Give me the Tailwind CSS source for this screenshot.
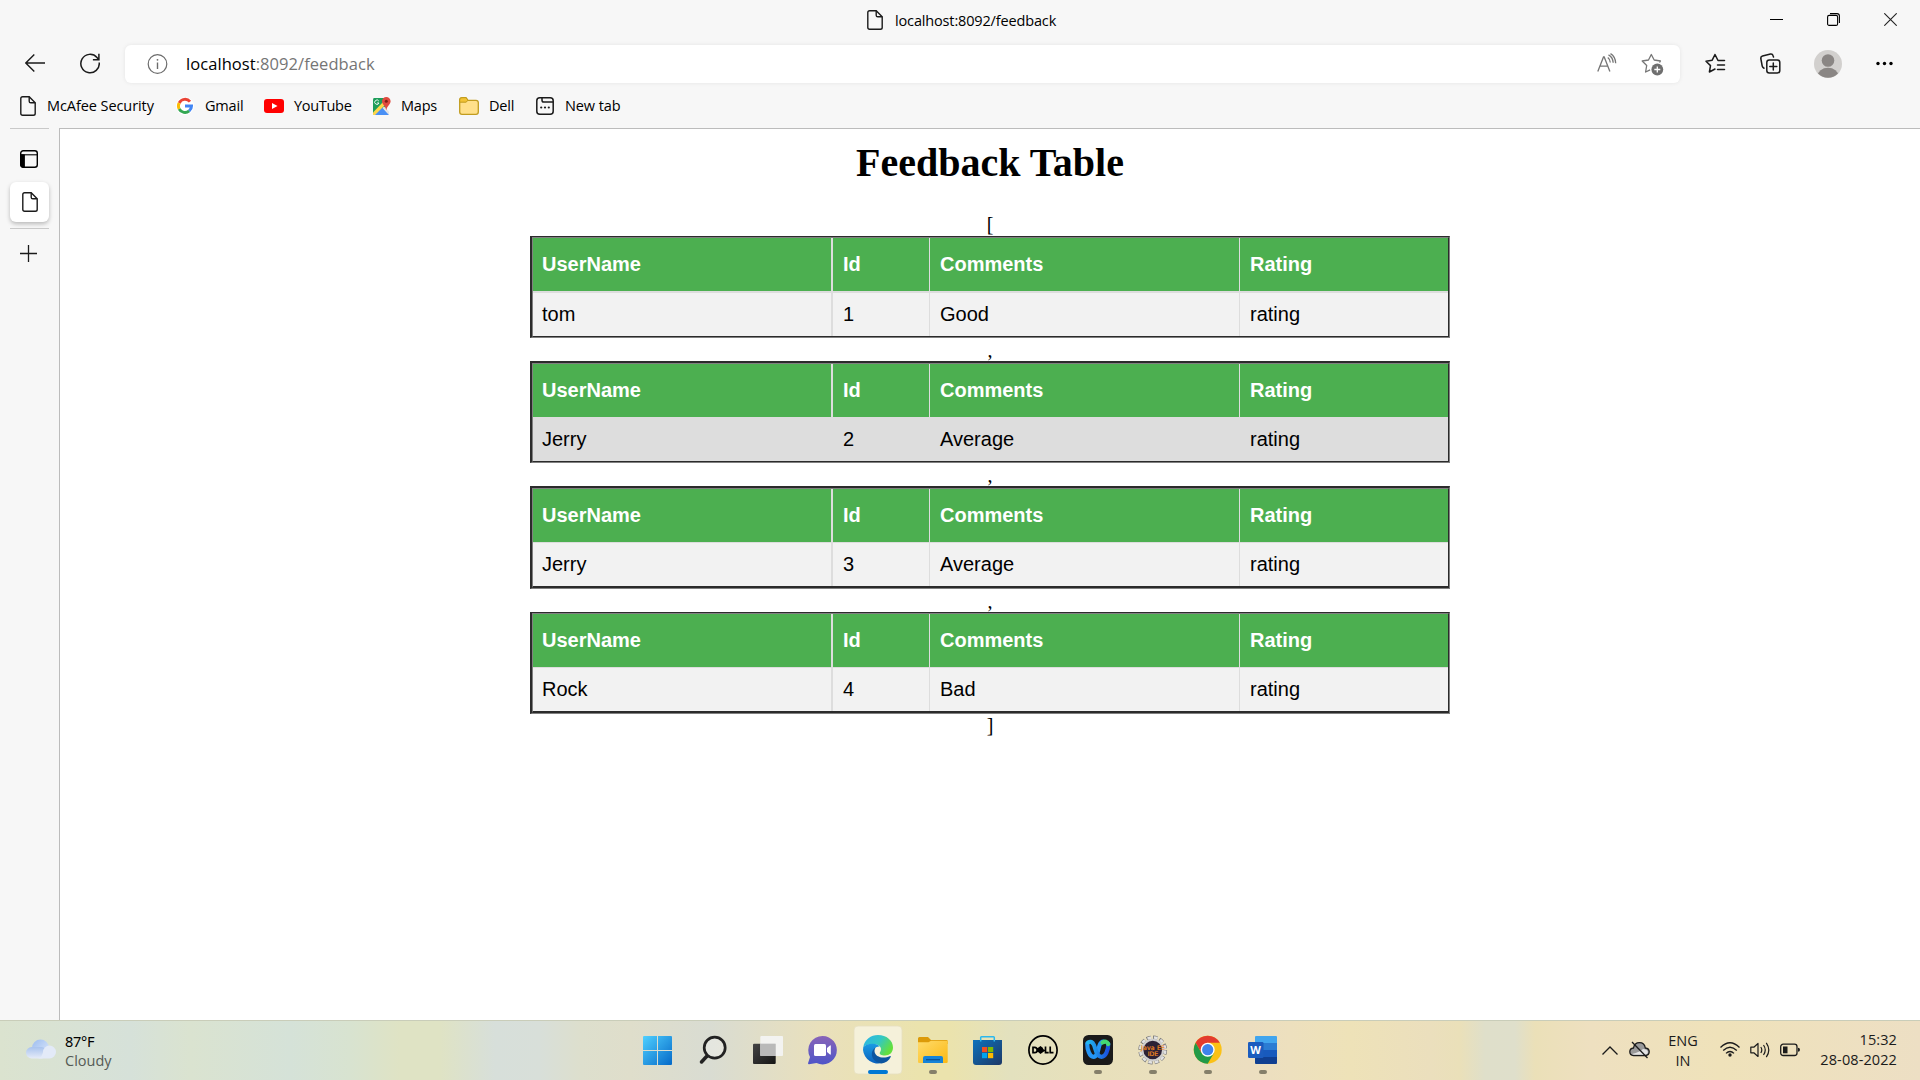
<!DOCTYPE html>
<html lang="en">
<head>
<meta charset="utf-8">
<title>localhost:8092/feedback</title>
<script src="https://cdn.jsdelivr.net/npm/@tailwindcss/browser@4"></script>
</head>
<body class="w-[1920px] h-[1080px] overflow-hidden bg-[#f7f7f7] font-['Open_Sans','Noto_Sans',sans-serif] text-black flex flex-col">

<!-- Title bar -->
<header class="h-[41px] shrink-0 flex items-start">
  <div class="w-[867px] shrink-0"></div>
  <svg class="mt-[10px] w-4 h-5 shrink-0" viewBox="0 0 16 20" fill="none" stroke="#1b1b1b" stroke-width="1.4"><path d="M2.6.8h6.6l6 6v10.6q0 1.8-1.8 1.8H2.6Q.8 19.200.8 17.400V2.600Q.8.8 2.600.8z"/><path d="M9.200.8v4.400q0 1.600 1.600 1.600h4.400"/></svg>
  <div class="ml-3 mt-[11px] w-[875px] text-[14.500px] leading-5 whitespace-nowrap tracking-[-0.150px]">localhost:8092/feedback</div>
  <div class="flex items-center mt-[13px] gap-[44px]">
    <svg class="w-[13px] h-[13px]" viewBox="0 0 13 13"><path d="M0 6.500h13" stroke="#000"/></svg>
    <svg class="w-[13px] h-[13px]" viewBox="0 0 13 13" fill="none" stroke="#000" stroke-width="1.100"><rect x=".6" y="2.400" width="10" height="10" rx="1.500"/><path d="M3 .6h7q2.400 0 2.400 2.400v7"/></svg>
    <svg class="w-[13px] h-[13px]" viewBox="0 0 13 13" stroke="#222" stroke-width="1.100"><path d="M.3.3l12.400 12.400M12.700.3L.3 12.700"/></svg>
  </div>
</header>

<!-- Address row -->
<div class="h-[46px] shrink-0 flex items-start">
  <svg class="ml-[25px] mt-[13px] w-5 h-[18px] shrink-0" viewBox="0 0 20 18" fill="none" stroke="#1b1b1b" stroke-width="1.400"><path d="M20 9H.8M9.300.6L.8 9l8.500 8.400"/></svg>
  <svg class="ml-[35px] mt-[12px] w-5 h-[21px] shrink-0" viewBox="0 0 20 21" fill="none" stroke="#1b1b1b" stroke-width="1.500"><path d="M19.200 9.500A9.200 9.200 0 1 1 17 4.500l1.800 2.200M18.900.8v6h-6"/></svg>
  <div class="ml-[25px] mt-1 w-[1555px] h-[38px] shrink-0 rounded-md bg-white shadow-[0_0_4px_rgba(0,0,0,0.08)] flex items-start">
    <svg class="ml-[22px] mt-[9px] w-[21px] h-[20px] shrink-0" viewBox="0 0 21 20" fill="none" stroke="#6b6b6b" stroke-width="1.200"><circle cx="10.500" cy="10" r="9.300"/><path d="M10.500 8.500v6.500" stroke-width="1.400"/><circle cx="10.500" cy="5.800" r=".9" fill="#6b6b6b" stroke="none"/></svg>
    <div class="ml-[18px] w-[1411px] mt-[6px] text-[16.500px] leading-[25px] whitespace-nowrap tracking-[0.060px] text-[#757575]"><span class="text-black">localhost</span>:8092/feedback</div>
    <svg class="mt-[8px] w-5 h-[20px] shrink-0" viewBox="0 0 20 20" fill="none" stroke="#767676" stroke-width="1.300"><path d="M.8 18.500L6.500 4h.7l5.700 14.500M2.800 13.200h8"/><path d="M10.800 4.500q2.500 2 2.500 5M11.500 1.800q4.400 2.300 4.700 8M13.500.6q4.900 3 5.200 9.600"/></svg>
    <svg class="ml-[24px] mt-[8px] w-[23px] h-[23px] shrink-0" viewBox="0 0 23 23"><path d="M18.500 9.500l1-1.500-6.300-1L10.300 1.500 7.500 7 1.200 8l4.500 4.500L4.600 19l4.500-2.200" fill="none" stroke="#767676" stroke-width="1.300" stroke-linejoin="round"/><circle cx="16.300" cy="16.500" r="5.900" fill="#6f6f6f"/><path d="M16.300 13.500v6M13.300 16.500h6" stroke="#fff" stroke-width="1.300"/></svg>
  </div>
  <svg class="ml-[25px] mt-[12px] w-[21px] h-[21px] shrink-0" viewBox="0 0 21 21" fill="none" stroke="#1b1b1b" stroke-width="1.500" stroke-linejoin="round" stroke-linecap="round"><path d="M19.500 7.500H13L10 1.500 7.200 7.200 1 8.200l4.500 4.400L4.400 19l5.600-3M12.500 12h7M12.500 16.500h7"/></svg>
  <svg class="ml-[34px] mt-[12px] w-[21px] h-[21px] shrink-0" viewBox="0 0 21 21" fill="none" stroke="#1b1b1b" stroke-width="1.500" stroke-linejoin="round" stroke-linecap="round"><rect x="6.800" y="7" width="13" height="13" rx="2.500"/><path d="M13.300 10v7M9.800 13.500h7M4 15.200Q2.500 14.500 2.200 13L.8 5.500Q.6 3.500 2.500 3L10.500 1q2-.3 2.500 1.500l.5 1.500"/></svg>
  <svg class="ml-[33px] mt-[9px] w-7 h-7 shrink-0" viewBox="0 0 28 28"><defs><clipPath id="av"><circle cx="14" cy="14" r="13.700"/></clipPath></defs><circle cx="14" cy="14" r="14" fill="#d2d0ce"/><g clip-path="url(#av)" fill="#8a8684"><circle cx="14" cy="10.500" r="6.300"/><ellipse cx="14" cy="26" rx="10.500" ry="8.200"/></g></svg>
  <svg class="ml-[34px] mt-[20px] w-[17px] h-[5px] shrink-0" viewBox="0 0 17 5"><circle cx="2" cy="2.500" r="1.700"/><circle cx="8.500" cy="2.500" r="1.700"/><circle cx="15" cy="2.500" r="1.700"/></svg>
</div>

<!-- Bookmarks -->
<nav class="h-[41px] shrink-0 pl-5 pb-[3px] flex items-center text-[14.500px] leading-5 whitespace-nowrap tracking-[-0.200px]">
  <svg class="w-4 h-5 mr-[11px]" viewBox="0 0 16 20" fill="none" stroke="#1b1b1b" stroke-width="1.400"><path d="M2.600.8h6.600l6 6v10.600q0 1.800-1.800 1.800H2.600Q.8 19.200.8 17.400V2.600Q.8.8 2.600.8z"/><path d="M9.200.8v4.400q0 1.600 1.600 1.600h4.400"/></svg>
  <span class="w-[129px] tracking-[-0.080px]">McAfee Security</span>
  <svg class="w-[18px] h-[18px] mr-[11px]" viewBox="0 0 18 18"><circle cx="9" cy="9" r="9" fill="#fff"/><g fill="none" stroke-width="3"><path d="M14 4.600A6.500 6.500 0 0 0 3.200 6" stroke="#ea4335"/><path d="M3.200 6a6.500 6.500 0 0 0 0 6" stroke="#fbbc05"/><path d="M3.200 12a6.500 6.500 0 0 0 10 1.900" stroke="#34a853"/><path d="M9 9h6.500q0 3-2.300 4.900" stroke="#4285f4"/></g></svg>
  <span class="w-[59px]">Gmail</span>
  <svg class="w-5 h-[14px] mr-[10px]" viewBox="0 0 20 14"><rect width="20" height="14" rx="3" fill="#f00"/><path d="M8 4l5.500 3L8 10z" fill="#fff"/></svg>
  <span class="w-[78px] tracking-[-0.300px]">YouTube</span>
  <svg class="w-[19px] h-[19px] mr-[10px]" viewBox="0 0 19 19"><path d="M2 1h10l2 9-13 8V3q0-2 1-2z" fill="#1e9d59"/><path d="M9 9l8 9H2z" fill="#4a90f5"/><path d="M1 15.500L12 4l2.500 2.500L3 18H1z" fill="#fdd64a"/><path d="M12 9.500l5 5v3l-6.500-6.500z" fill="#e4e4e4"/><path d="M14.300 0a4.300 4.300 0 0 1 4.300 4.300c0 3-3.400 4.400-4.300 9-.9-4.600-4.300-6-4.300-9A4.300 4.300 0 0 1 14.300 0z" fill="#e04a3f"/><circle cx="14.300" cy="4.200" r="1.500" fill="#7d1f16"/><path d="M6.800 4A2.200 2.200 0 1 0 7 6H5" fill="none" stroke="#fff" stroke-width=".9"/></svg>
  <span class="w-[58px]">Maps</span>
  <svg class="w-[20px] h-[18px] mr-[10px]" viewBox="0 0 20 18"><path d="M.7 3Q.7.700 3 .700h4l2 2.600h8q2.300 0 2.300 2.300v9.400q0 2.300-2.300 2.300H3Q.7 17.300.7 15z" fill="#ffe08a" stroke="#c19c1f" stroke-width="1.300"/><path d="M.7 5.200H7l2-1.900L7 .7H3Q.7.700.7 3z" fill="#f2c335" stroke="#c19c1f"/></svg>
  <span class="w-[47px]">Dell</span>
  <svg class="w-[18px] h-[18px] mr-[11px]" viewBox="0 0 18 18" fill="none" stroke="#1b1b1b" stroke-width="1.500"><rect x=".8" y=".8" width="16.400" height="16.400" rx="3"/><path d="M6 .8v2.400q0 1.800 1.800 1.800h9.400"/><g fill="#1b1b1b" stroke="none"><circle cx="5.200" cy="10.500" r="1.100"/><circle cx="9" cy="10.500" r="1.100"/><circle cx="12.800" cy="10.500" r="1.100"/></g></svg>
  <span class="tracking-[-0.100px]">New tab</span>
</nav>

<div class="h-[892px] shrink-0 flex">
  <!-- Vertical tabs -->
  <aside class="w-[59px] shrink-0 flex flex-col items-center">
    <div class="w-[39px] h-px bg-[#c9c9c9]"></div>
    <svg class="mt-[21px] mr-px w-[18px] h-[18px]" viewBox="0 0 18 18" fill="none" stroke="#000" stroke-width="1.400"><rect x=".7" y=".7" width="16.600" height="16.600" rx="2.500"/><path d="M1 4.800h16" stroke-width="1.100"/><path d="M.7 4.800h3.800v12.500H3Q.7 17.300.7 15z" fill="#000" stroke-width=".8"/></svg>
    <div class="mt-[14px] w-[39px] h-10 rounded-md bg-white shadow-[0_2px_4px_rgba(0,0,0,0.25)] flex items-center justify-center">
      <svg class="w-4 h-5" viewBox="0 0 16 20" fill="none" stroke="#1b1b1b" stroke-width="1.400"><path d="M2.600.8h6.600l6 6v10.600q0 1.800-1.800 1.800H2.600Q.8 19.200.8 17.400V2.600Q.8.8 2.600.8z"/><path d="M9.200.8v4.400q0 1.600 1.600 1.600h4.400"/></svg>
    </div>
    <div class="mt-[6px] w-[39px] h-px bg-[#c9c9c9]"></div>
    <svg class="mt-4 mr-[2px] w-[17px] h-[17px]" viewBox="0 0 17 17" stroke="#1b1b1b" stroke-width="1.300"><path d="M8.500 0v17M0 8.500h17"/></svg>
  </aside>

  <!-- Page -->
  <main class="w-[1861px] bg-white border-t border-l border-[#bcbcbc] font-['Liberation_Serif','Times_New_Roman',serif] text-[20px] leading-[23px] text-center flex flex-col items-center">
    <h1 class="mt-[11px] h-[46px] text-[40px] leading-[46px] font-bold">Feedback Table</h1>
    <div class="mt-[27px] h-[23px]">[</div>
    <div id="tables" class="flex flex-col items-center"></div>
    <div>]</div>
  </main>
</div>

<!-- Taskbar -->
<footer class="h-[60px] shrink-0 border-t border-[#c9cdb9] bg-[linear-gradient(90deg,#dbe3cf_0px,#d6e1d9_130px,#dae3d0_190px,#d5e2d8_290px,#d8e3d0_350px,#dfe3c4_400px,#dfe3c4_440px,#d7dfda_495px,#d8dfd9_540px,#dddfcd_580px,#dfdecb_630px,#d9dcd2_710px,#e9e0bc_820px,#ebe3ad_920px,#ebe3ad_950px,#e3e1be_1010px,#e8e0bb_1100px,#ecdec0_1250px,#ede0be_1290px,#eee2b8_1350px,#ebdfbd_1430px,#eae0b9_1460px,#dfdfca_1485px,#dfdfcb_1515px,#ebe0b8_1535px,#eee0c0_1590px,#efe2ba_1720px,#eddfc4_1920px)] flex text-[14.500px] leading-5 whitespace-nowrap">
  <div class="w-[630px] shrink-0 flex pl-[26px] pt-[10px]">
    <svg class="mt-[8px] w-[30px] h-[20px]" viewBox="0 0 30 20"><defs><linearGradient id="c1" x1="0" y1="0" x2="1" y2="1"><stop stop-color="#9dbdf0"/><stop offset="1" stop-color="#dfe9fb"/></linearGradient><linearGradient id="c2" x1="0" y1="0" x2="0" y2="1"><stop stop-color="#a9c3ee"/><stop offset="1" stop-color="#e6ecf8"/></linearGradient></defs><circle cx="14.500" cy="9" r="8.500" fill="url(#c1)"/><rect y="8" width="21" height="11.500" rx="5.700" fill="url(#c2)"/><path d="M17 13a6.500 6.500 0 1 1 6.500 6.500H12q4-1 5-6.500z" fill="#e3eaf8"/></svg>
    <div class="ml-[9px]"><div class="tracking-[-0.300px] font-['Noto_Sans',sans-serif]">87°F</div><div class="text-[#555a55]">Cloudy</div></div>
  </div>

  <div class="w-[660px] shrink-0 flex -mt-px">
    <svg class="w-[55px] h-[60px]" viewBox="0 0 55 60"><defs><linearGradient id="w" x1="0" y1="0" x2="1" y2="1" ><stop stop-color="#4fd0ff"/><stop offset="1" stop-color="#0569c8"/></linearGradient></defs><path d="M13 17q0-1 1-1h13v13.900H13zM28 16h13q1 0 1 1v12.900H28zM13 31h14v14H14q-1 0-1-1zM28 31h14v13q0 1-1 1H28z" fill="url(#w)"/></svg>
    <svg class="w-[55px] h-[60px]" viewBox="0 0 55 60" fill="none" stroke="#222" stroke-linecap="round"><path d="M22 36l-5.500 6" stroke-width="3.500"/><circle cx="29.700" cy="27.700" r="10.500" fill="#fff" fill-opacity=".3" stroke-width="2.700"/></svg>
    <svg class="w-[55px] h-[60px]" viewBox="0 0 55 60"><defs><linearGradient id="tv" x1="0" y1="0" x2="1" y2="1"><stop stop-color="#444"/><stop offset="1" stop-color="#151515"/></linearGradient></defs><rect x="13" y="23.700" width="22.700" height="20.300" rx="1" fill="url(#tv)"/><rect x="20.300" y="16" width="22.700" height="20" rx="1" fill="#f4f4f4" fill-opacity=".93"/><path d="M20.300 23.700h15.400V36H20.300z" fill="#b9b9b9"/></svg>
    <svg class="w-[55px] h-[60px]" viewBox="0 0 55 60"><defs><linearGradient id="ch" x1="0" y1="0" x2="0" y2="1"><stop stop-color="#8864b8"/><stop offset="1" stop-color="#4f55c8"/></linearGradient></defs><path d="M27.700 16a14.200 14.200 0 1 1-6.200 27l-7.500 1.200q-1.200 0-.9-1.200l1.900-6A14.200 14.200 0 0 1 27.700 16z" fill="url(#ch)"/><rect x="19" y="24" width="12" height="12" rx="1.500" fill="#fff"/><path d="M32 28l3-2.600q.8-.3.800.6v8q0 .9-.8.6L32 32z" fill="#fff"/></svg>
    <svg class="w-[55px] h-[60px]" viewBox="0 0 55 60"><defs><linearGradient id="e1" x1="0" y1="0" x2="1" y2=".5"><stop stop-color="#2bb3ea"/><stop offset=".55" stop-color="#33c7c4"/><stop offset="1" stop-color="#63e03c"/></linearGradient><linearGradient id="e2" x1="0" y1="0" x2="0" y2="1"><stop stop-color="#1b9be3"/><stop offset="1" stop-color="#0a61bd"/></linearGradient></defs><rect x="4" y="6" width="48" height="48" rx="4" fill="#f5f1da" stroke="#e6dfc0" stroke-width=".8"/><path d="M13.300 27C14.500 19.500 21 15 28 15c8.500 0 15 5.500 15 12.500 0 5-3.500 8-8 8-4 0-5.500-1.500-5.300-2.600.200-1 1.300-1.700 1.300-3.900 0-2.500-3-5-7.500-5-4.500 0-8.200 1.300-10.200 3z" fill="url(#e1)"/><path d="M13.300 27c2-2.300 5.700-3.500 9.700-3.300 3 .1 5.500 1.300 6.800 2.800-3.800-.5-6.300 2.500-6.300 6 0 6 4 10.500 9 10.300A15 15 0 0 1 13 30z" fill="url(#e2)"/><path d="M25.500 27.500C19.500 31 20.500 42 31.500 43.500c4-.5 7.500-3 9.200-6.500.3-.8-.3-1.200-1-.8-6 3-15 1-15.200-5.200q0-2 1-3.500z" fill="#0c55a0"/><rect x="18" y="50" width="20" height="4" rx="2" fill="#0078d4"/></svg>
    <svg class="w-[55px] h-[60px]" viewBox="0 0 55 60"><defs><linearGradient id="fo" x1="0" y1="0" x2="1" y2="1"><stop stop-color="#ffdb6b"/><stop offset="1" stop-color="#fbb914"/></linearGradient></defs><path d="M13 18.500Q13 17 14.500 17H23l3 3h15.500q1.200 0 1.200 1.200V24H13z" fill="#dc9a09"/><path d="M13 22.300h10.500l2.500-1.500h16.700v21q0 1.200-1.200 1.200H14.200Q13 43 13 41.800z" fill="url(#fo)"/><path d="M18 43v-5q0-2 2-2h16q2 0 2 2v5z" fill="#1683d8"/><path d="M21 39.700h14" stroke="#0b4f94" stroke-width="1.200"/><rect x="24" y="50" width="8" height="4" rx="2" fill="#857f6a"/></svg>
    <svg class="w-[55px] h-[60px]" viewBox="0 0 55 60"><defs><linearGradient id="st" x1="0" y1="0" x2="1" y2="1"><stop stop-color="#0d72bd"/><stop offset="1" stop-color="#1d3866"/></linearGradient></defs><path d="M13 20h29v22q0 3-3 3H16q-3 0-3-3z" fill="url(#st)"/><path d="M20.700 21.500v-4q0-.8.800-.8h12q.8 0 .8.800v4" fill="none" stroke="#2bb8ee" stroke-width="1.500"/><path d="M22 27h5.200v5.200H22z" fill="#f25022"/><path d="M28 27h5.200v5.200H28z" fill="#7fba00"/><path d="M22 33h5.200v5.200H22z" fill="#00a4ef"/><path d="M28 33h5.200v5.200H28z" fill="#ffb900"/></svg>
    <svg class="w-[55px] h-[60px]" viewBox="0 0 55 60" fill="none" stroke="#000"><circle cx="28" cy="30" r="14.100" stroke-width="1.700"/><g stroke-width="1.700"><path d="M18 27.300h1.500q2.700 0 2.700 2.700t-2.700 2.700H18zM21.500 30l4-3 2 1.600M22.500 31.500l4-3M25 33l4-3.100M28 28.500l-4 3 1.500 1.500 4-3M30.500 26.500v6.200h3.200M35.200 26.500v6.200h3.300"/></g></svg>
    <svg class="w-[55px] h-[60px]" viewBox="0 0 55 60" fill="none"><defs><linearGradient id="x1" x1="0" y1="0" x2="1" y2="0"><stop stop-color="#22b8f0"/><stop offset="1" stop-color="#1a4fe0"/></linearGradient></defs><rect x="13" y="15" width="30" height="30" rx="5.500" fill="#1a1a1a"/><path d="M17.200 23.500c0 6 2.300 13.300 6.300 13.300 4.500 0 4.500-8.300 6.300-12.300q1.200-2.600 3.700-2.800" stroke="#2596f5" stroke-width="4.200" stroke-linecap="round"/><path d="M18 22.500q3.800-2.300 6 2.500c1.700 4 2.500 11.800 7.500 11.800 4 0 6.800-6.300 6.800-13" stroke="url(#x1)" stroke-width="4.200" stroke-linecap="round"/><path d="M32.500 22.500q4-2.200 5.700 1.500" stroke="#43d873" stroke-width="4.200" stroke-linecap="round"/><rect x="24" y="50" width="8" height="4" rx="2" fill="#857f6a"/></svg>
    <svg class="w-[55px] h-[60px]" viewBox="0 0 55 60"><circle cx="27.700" cy="30" r="12.600" fill="none" stroke="#777" stroke-width="3.600" stroke-dasharray="4.400 2.200"/><circle cx="27.700" cy="30" r="12.500" fill="none" stroke="#e2e2e2" stroke-width="2.600" stroke-dasharray="3.600 3" stroke-dashoffset="-.4"/><circle cx="27.700" cy="30" r="10.300" fill="#2c2236" stroke="#cfcfcf" stroke-width="2"/><text x="28" y="29.500" text-anchor="middle" font-family="DejaVu Sans" font-size="6.200" fill="#f58a1f" stroke="#f58a1f" stroke-width=".2" textLength="24">Java EE</text><text x="28" y="35.500" text-anchor="middle" font-family="DejaVu Sans" font-size="6.200" fill="#f58a1f" stroke="#f58a1f" stroke-width=".2" textLength="10.500">IDE</text><rect x="24" y="50" width="8" height="4" rx="2" fill="#857f6a"/></svg>
    <svg class="w-[55px] h-[60px]" viewBox="0 0 55 60"><circle cx="27.700" cy="29.700" r="14" fill="#fbc116"/><path d="M15.600 22.700A14 14 0 0 1 39.800 22.700H27.700L21.600 33.200z" fill="#e33b2e"/><path d="M15.600 22.700a14 14 0 0 0 12.100 21L33.800 33.200H21.600z" fill="#229a48"/><circle cx="27.700" cy="29.700" r="7" fill="#fff"/><circle cx="27.700" cy="29.700" r="5.600" fill="#3f83ec"/><rect x="24" y="50" width="8" height="4" rx="2" fill="#857f6a"/></svg>
    <svg class="w-[55px] h-[60px]" viewBox="0 0 55 60"><path d="M20 17q0-1 1-1h20q1 0 1 1v6H20z" fill="#41a5ee"/><path d="M20 23h22v7H20z" fill="#2b7cd3"/><path d="M20 30h22v7H20z" fill="#185abd"/><path d="M20 37h22v6q0 1-1 1H21q-1 0-1-1z" fill="#103f91"/><rect x="13" y="22" width="15.500" height="16" rx="1.200" fill="#1b5cbe"/><text x="20.600" y="33.800" text-anchor="middle" font-family="Open Sans" font-weight="bold" font-size="11" fill="#fff">W</text><rect x="24" y="50" width="8" height="4" rx="2" fill="#857f6a"/></svg>
  </div>

  <div class="w-[630px] shrink-0 flex pl-[312px] text-[#1b1b1b]">
    <svg class="mt-[25px] w-4 h-[9px] shrink-0" viewBox="0 0 16 9" fill="none" stroke="#1b1b1b" stroke-width="1.300"><path d="M.5 8.500L8 1l7.500 7.500"/></svg>
    <svg class="ml-[11px] mt-[20px] w-[21px] h-[18px] shrink-0" viewBox="0 0 21 18"><path d="M4.500 14.500Q.8 14.300.8 10.800T4.500 7Q5.500 1.700 10.500 1.700T16.300 7q3.900.3 3.900 3.800t-3.900 3.700z" fill="#9a9a9a" stroke="#1b1b1b" stroke-width="1.300"/><path d="M3 13q8-2 11-5 4 0 5 3-.5 2.700-3 2.700H5q-1.200 0-2-.7z" fill="#e4e4e4"/><path d="M3 1l15.500 16" stroke="#1b1b1b" stroke-width="1.300"/></svg>
    <div class="ml-[15px] w-[36px] pt-[10px] text-center">ENG<br>IN</div>
    <svg class="ml-[19px] mt-[20px] w-[20px] h-[17px] shrink-0" viewBox="0 0 20 17" fill="none" stroke="#1b1b1b" stroke-width="1.300"><path d="M.5 6.500q9.500-9.500 19 0M3.200 9.500q6.800-6.600 13.600 0M6 12.400q4-3.800 8 0"/><circle cx="10" cy="14" r="1.700" fill="#1b1b1b" stroke="none"/></svg>
    <svg class="ml-[10px] mt-[20px] w-[20px] h-[18px] shrink-0" viewBox="0 0 20 18" fill="none" stroke="#1b1b1b" stroke-width="1.200" stroke-linejoin="round"><path d="M.8 6.200h3L8 2.500v13L3.800 11.800h-3z"/><path d="M10.800 6q2 3 0 6M13.500 4q3.500 5 0 10M16.300 1.800q5 7.200 0 14.400"/></svg>
    <svg class="ml-[10px] mt-[22px] w-[20px] h-[14px] shrink-0" viewBox="0 0 20 14"><rect x=".7" y="1.200" width="16.300" height="11.300" rx="2.500" fill="none" stroke="#1b1b1b" stroke-width="1.300"/><rect x="3" y="3.500" width="4.500" height="6.800" fill="#1b1b1b"/><path d="M18 4.800q2 .2 2 2t-2 2z" fill="#1b1b1b"/></svg>
    <div class="ml-[6px] w-[91px] pt-[9px] text-right tracking-[0.100px]">15:32<br>28-08-2022</div>
  </div>
</footer>

<script>
  const tables = [
    { row: ['tom', '1', 'Good', 'rating'], outer: 'border-t', inner: 'border-b', line: 'border-t-2', bg: 'bg-[#f2f2f2]', h: 'h-[45px]' },
    { row: ['Jerry', '2', 'Average', 'rating'], outer: 'border-t-2', inner: 'border-b', line: 'border-t', bg: 'bg-[#dddddd]', h: 'h-[44px]' },
    { row: ['Jerry', '3', 'Average', 'rating'], outer: 'border-t-2', inner: 'border-b-2', line: 'border-t', bg: 'bg-[#f2f2f2]', h: 'h-[44px]' },
    { row: ['Rock', '4', 'Bad', 'rating'], outer: 'border-t', inner: 'border-b-2', line: 'border-t', bg: 'bg-[#f2f2f2]', h: 'h-[44px]' }
  ];
  const edges = ['border-r-2 pl-[9px]', 'border-r pl-[10px]', 'border-r pl-[10px]', 'pl-[10px]'];
  const cells = (list) => list.map((t, i) => `<div class="flex items-center border-[#dddddd] ${edges[i]}">${t}</div>`).join('');
  document.getElementById('tables').innerHTML = tables.map((t, i) => `
    <div class="w-[920px] ${t.outer} border-l-2 border-r border-b border-t-[#2b2b2b] border-l-[#2b2b2b] border-r-[#808080] border-b-[#808080] text-left font-['Liberation_Sans',Arial,sans-serif]">
      <div class="${t.inner} border-t border-l border-r border-t-[#808080] border-l-[#808080] border-r-[#2b2b2b] border-b-[#2b2b2b]">
        <div class="grid grid-cols-[300px_97px_310px_208px] h-[53px] bg-[#4caf50] text-white font-bold">${cells(['UserName', 'Id', 'Comments', 'Rating'])}</div>
        <div class="grid grid-cols-[300px_97px_310px_208px] ${t.h} ${t.bg} ${t.line} border-[#dddddd]">${cells(t.row)}</div>
      </div>
    </div>${i < 3 ? '<div class="h-[23px] leading-[24px]">,</div>' : ''}`).join('');
</script>
</body>
</html>
